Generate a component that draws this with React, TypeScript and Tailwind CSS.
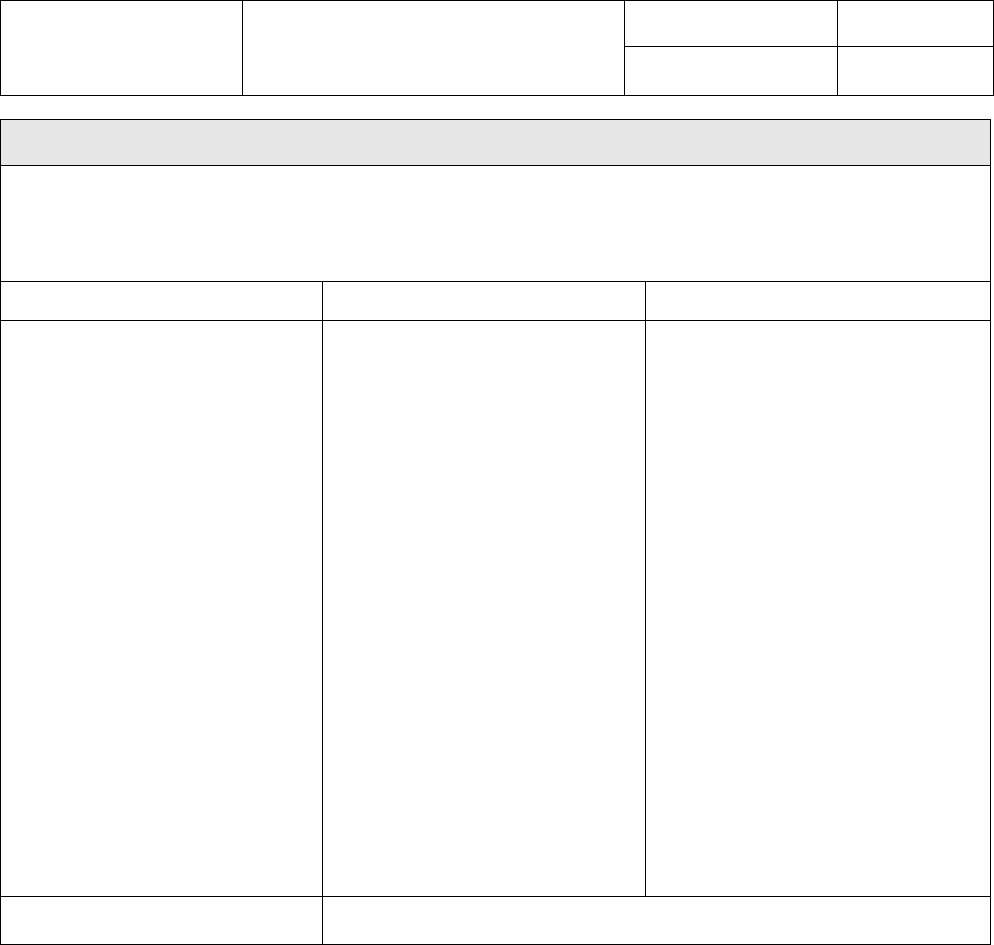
import React from "react";

const App: React.FC = () => {
  return (
    <div className="min-h-screen bg-white font-['Liberation_Sans',Arial,sans-serif] text-black">
      {/* Top info table */}
      <div className="flex h-[96px] w-[994px] border border-black">
        <div className="w-[242px] border-r border-black" />
        <div className="w-[382px] border-r border-black" />
        <div className="flex w-[213px] flex-col border-r border-black">
          <div className="h-[46px] border-b border-black" />
          <div className="flex-1" />
        </div>
        <div className="flex flex-1 flex-col">
          <div className="h-[46px] border-b border-black" />
          <div className="flex-1" />
        </div>
      </div>

      {/* Main table */}
      <div className="mt-[23px] flex h-[826px] w-[991px] flex-col border border-black">
        <div className="h-[46px] border-b border-black bg-[#e6e6e6]" />
        <div className="h-[116px] border-b border-black" />
        <div className="flex h-[39px] border-b border-black">
          <div className="w-[322px] border-r border-black" />
          <div className="w-[323px] border-r border-black" />
          <div className="flex-1" />
        </div>
        <div className="flex h-[576px] border-b border-black">
          <div className="w-[322px] border-r border-black" />
          <div className="w-[323px] border-r border-black" />
          <div className="flex-1" />
        </div>
        <div className="flex flex-1">
          <div className="w-[322px] border-r border-black" />
          <div className="flex-1" />
        </div>
      </div>
    </div>
  );
};

export default App;
